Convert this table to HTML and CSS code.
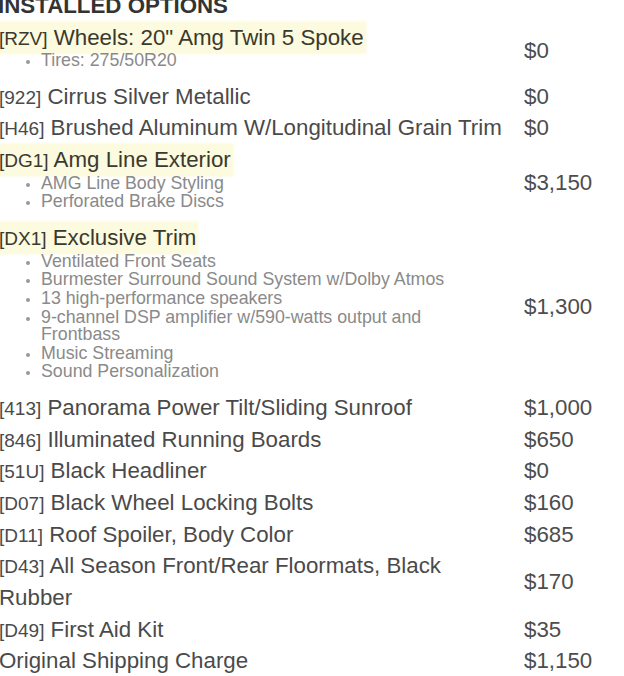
FILE: index.html
```html
<!DOCTYPE html>
<html>
<head>
<meta charset="utf-8">
<link rel="stylesheet" href="styles.css">
</head>
<body>
<div class="options">
  <h2 class="heading">INSTALLED OPTIONS</h2>
  <div class="grid">
    <div class="item">
      <div class="title"><span class="hl"><span class="code">[RZV]</span> Wheels: 20" Amg Twin 5 Spoke</span></div>
      <ul class="feats"><li>Tires: 275/50R20</li></ul>
    </div>
    <div class="price">$0</div>

    <div class="item"><div class="title"><span class="code">[922]</span> Cirrus Silver Metallic</div></div>
    <div class="price">$0</div>

    <div class="item"><div class="title"><span class="code">[H46]</span> Brushed Aluminum W/Longitudinal Grain Trim</div></div>
    <div class="price">$0</div>

    <div class="item">
      <div class="title"><span class="hl"><span class="code">[DG1]</span> Amg Line Exterior</span></div>
      <ul class="feats"><li>AMG Line Body Styling</li><li>Perforated Brake Discs</li></ul>
    </div>
    <div class="price">$3,150</div>

    <div class="item">
      <div class="title"><span class="hl"><span class="code">[DX1]</span> Exclusive Trim</span></div>
      <ul class="feats">
        <li>Ventilated Front Seats</li>
        <li>Burmester Surround Sound System w/Dolby Atmos</li>
        <li>13 high-performance speakers</li>
        <li>9-channel DSP amplifier w/590-watts output and Frontbass</li>
        <li>Music Streaming</li>
        <li>Sound Personalization</li>
      </ul>
    </div>
    <div class="price">$1,300</div>

    <div class="item"><div class="title"><span class="code">[413]</span> Panorama Power Tilt/Sliding Sunroof</div></div>
    <div class="price">$1,000</div>

    <div class="item"><div class="title"><span class="code">[846]</span> Illuminated Running Boards</div></div>
    <div class="price">$650</div>

    <div class="item"><div class="title"><span class="code">[51U]</span> Black Headliner</div></div>
    <div class="price">$0</div>

    <div class="item"><div class="title"><span class="code">[D07]</span> Black Wheel Locking Bolts</div></div>
    <div class="price">$160</div>

    <div class="item"><div class="title"><span class="code">[D11]</span> Roof Spoiler, Body Color</div></div>
    <div class="price">$685</div>

    <div class="item"><div class="title"><span class="code">[D43]</span> All Season Front/Rear Floormats, Black Rubber</div></div>
    <div class="price">$170</div>

    <div class="item"><div class="title"><span class="code">[D49]</span> First Aid Kit</div></div>
    <div class="price">$35</div>

    <div class="item"><div class="title">Original Shipping Charge</div></div>
    <div class="price">$1,150</div>
  </div>
</div>
</body>
</html>
```

FILE: styles.css
```css
html, body {
  margin: 0;
  padding: 0;
  background: #ffffff;
}

body {
  font-family: "Liberation Sans", Arial, sans-serif;
  color: #4a4a4a;
  overflow: hidden;
}

.options {
  margin-top: -7px;
  margin-left: -1px;
}

.heading {
  margin: 0 0 2.5px -1px;
  font-size: 22.3px;
  line-height: 26px;
  font-weight: bold;
  color: #333333;
}

.grid {
  display: grid;
  grid-template-columns: 510px 1fr;
  column-gap: 15px;
  align-items: center;
}

.title {
  font-size: 22.3px;
  line-height: 31.67px;
}

.code {
  font-size: 19px;
  line-height: 1;
}

.hl {
  display: inline-block;
  background: #fcfadf;
  color: #3a392e;
  padding-right: 2px;
  box-shadow: 0 0 3px 1px #fdfbe8;
}

.feats {
  margin: -1px 0 0 0;
  padding: 0 48px 9.5px 42px;
  list-style: disc;
  font-size: 17.8px;
  line-height: 16.5px;
  color: #8a8a8a;
}

.feats li {
  margin-bottom: 2.4px;
}

.feats li::marker {
  font-size: 13px;
  color: #999999;
}

.price {
  font-size: 22.3px;
  line-height: 31.67px;
  color: #4d4d4d;
}
```
